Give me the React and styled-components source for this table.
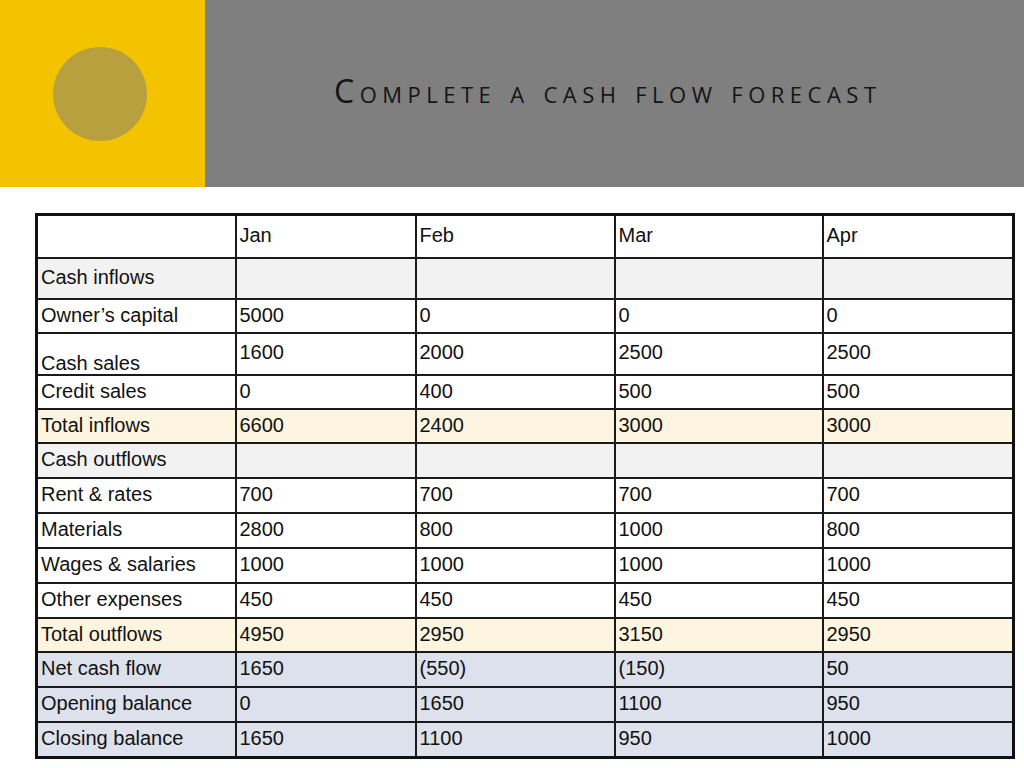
import React from "react";
import styled, { createGlobalStyle } from "styled-components";

const GlobalStyle = createGlobalStyle`
  html, body {
    margin: 0;
    padding: 0;
    background: #ffffff;
  }
  body {
    font-family: "Liberation Sans", Arial, sans-serif;
  }
`;

const Page = styled.div`
  width: 1024px;
  height: 768px;
  display: flex;
  flex-direction: column;
  overflow: hidden;
`;

const Header = styled.header`
  height: 187px;
  display: flex;
`;

const Accent = styled.div`
  width: 205px;
  background: #f4c300;
  display: flex;
  align-items: center;
  justify-content: center;
  padding-right: 6px;
  box-sizing: border-box;
`;

const Dot = styled.div`
  width: 94px;
  height: 94px;
  border-radius: 50%;
  background: #b9a03f;
`;

const TitleBar = styled.div`
  flex: 1;
  background: #7f7f7f;
  display: flex;
  align-items: center;
  padding-left: 129px;
  padding-bottom: 6px;
`;

const Title = styled.h1`
  margin: 0;
  font-family: "Open Sans", "Noto Sans", sans-serif;
  font-weight: 400;
  font-size: 32px;
  font-variant: small-caps;
  letter-spacing: 5.5px;
  color: #141414;
  white-space: nowrap;
`;

const Body = styled.main`
  padding: 26px 12px 0 35px;
`;

const Table = styled.table`
  width: 977px;
  border-collapse: collapse;
  border: 3px solid #111;
  font-size: 20px;
  color: #111;
  table-layout: fixed;
`;

const bgs = {
  plain: "#ffffff",
  section: "#f2f2f2",
  total: "#fdf5df",
  balance: "#dce1ec",
};

const Row = styled.tr`
  height: ${(p) => p.$h}px;
  background: ${(p) => bgs[p.$kind || "plain"]};
`;

const Cell = styled.td`
  border: 2px solid #1a1a1a;
  padding: 0 3px;
  vertical-align: ${(p) => p.$valign || "middle"};
  padding-bottom: ${(p) => (p.$valign === "bottom" ? "0" : "2px")};
  white-space: nowrap;
  line-height: 22px;
`;

const cols = [199, 180, 199, 208, 191];

const rows = [
  { label: "", vals: ["Jan", "Feb", "Mar", "Apr"], h: 43 },
  { label: "Cash inflows", vals: ["", "", "", ""], h: 41, kind: "section" },
  { label: "Owner’s capital", vals: ["5000", "0", "0", "0"], h: 34 },
  { label: "Cash sales", vals: ["1600", "2000", "2500", "2500"], h: 42, split: true },
  { label: "Credit sales", vals: ["0", "400", "500", "500"], h: 34 },
  { label: "Total inflows", vals: ["6600", "2400", "3000", "3000"], h: 34, kind: "total" },
  { label: "Cash outflows", vals: ["", "", "", ""], h: 35, kind: "section" },
  { label: "Rent & rates", vals: ["700", "700", "700", "700"], h: 35 },
  { label: "Materials", vals: ["2800", "800", "1000", "800"], h: 35 },
  { label: "Wages & salaries", vals: ["1000", "1000", "1000", "1000"], h: 35 },
  { label: "Other expenses", vals: ["450", "450", "450", "450"], h: 35 },
  { label: "Total outflows", vals: ["4950", "2950", "3150", "2950"], h: 34, kind: "total" },
  { label: "Net cash flow", vals: ["1650", "(550)", "(150)", "50"], h: 35, kind: "balance" },
  { label: "Opening balance", vals: ["0", "1650", "1100", "950"], h: 35, kind: "balance" },
  { label: "Closing balance", vals: ["1650", "1100", "950", "1000"], h: 36, kind: "balance" },
];

export default function App() {
  return (
    <>
      <GlobalStyle />
      <Page>
        <Header>
          <Accent>
            <Dot />
          </Accent>
          <TitleBar>
            <Title>Complete a cash flow forecast</Title>
          </TitleBar>
        </Header>
        <Body>
          <Table>
            <colgroup>
              {cols.map((w, i) => (
                <col key={i} style={{ width: w }} />
              ))}
            </colgroup>
            <tbody>
              {rows.map((r, i) => (
                <Row key={i} $h={r.h} $kind={r.kind}>
                  <Cell $valign={r.split ? "bottom" : "middle"}>{r.label}</Cell>
                  {r.vals.map((v, j) => (
                    <Cell key={j} $valign={r.split ? "top" : "middle"} style={r.split ? { paddingTop: 7 } : undefined}>
                      {v}
                    </Cell>
                  ))}
                </Row>
              ))}
            </tbody>
          </Table>
        </Body>
      </Page>
    </>
  );
}
